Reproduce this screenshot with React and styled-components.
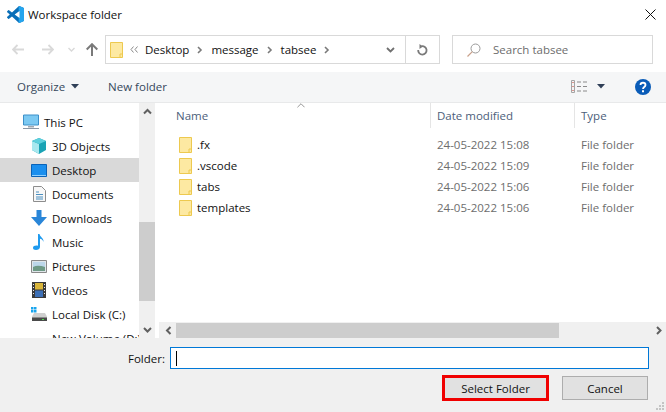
import React from "react";
import styled, { createGlobalStyle } from "styled-components";

const GlobalStyle = createGlobalStyle`
  html, body { margin: 0; padding: 0; background: #fff; }
  body { font-family: "Open Sans", "Noto Sans", sans-serif; font-size: 11.5px; color: #111; }
  * { box-sizing: border-box; }
`;

const Dialog = styled.div`
  width: 666px;
  height: 412px;
  display: flex;
  flex-direction: column;
  overflow: hidden;
  background: #fff;
`;
const TitleBar = styled.div`
  height: 35px;
  display: flex;
  align-items: flex-start;
  padding: 6px 10px 0 7px;
  gap: 4px;
`;
const TitleText = styled.span`
  flex: 1;
  line-height: 18px;
`;
const CloseIcon = styled.svg`
  margin-top: 3px;
`;
const NavRow = styled.div`
  height: 29px;
  margin-bottom: 8px;
  display: flex;
  align-items: center;
  padding-right: 13px;
`;
const NavButtons = styled.div`
  width: 105px;
  height: 100%;
  display: grid;
  grid-template-columns: 30px 26px 18px 12px;
  padding-left: 12px;
  align-items: center;
`;
const AddressBox = styled.div`
  width: 335px;
  height: 29px;
  border: 1px solid #d9d9d9;
  display: flex;
  align-items: center;
  padding-left: 4px;
`;
const CrumbSep = styled.span`
  width: 22px;
  display: flex;
  justify-content: center;
  align-items: center;
  flex: none;
`;
const AddressEnd = styled.div`
  margin-left: auto;
  height: 100%;
  display: flex;
  align-items: center;
`;
const DropZone = styled.div`
  width: 32px;
  height: 100%;
  display: flex;
  align-items: center;
  justify-content: center;
  padding-left: 2px;
  border-right: 1px solid #d9d9d9;
`;
const RefreshZone = styled.div`
  width: 33px;
  height: 100%;
  display: flex;
  align-items: center;
  justify-content: center;
`;
const SearchBox = styled.div`
  margin-left: 12px;
  flex: 1;
  height: 29px;
  border: 1px solid #d9d9d9;
  display: flex;
  align-items: center;
  padding-left: 14px;
  gap: 12px;
  color: #6d6d6d;
`;
const Toolbar = styled.div`
  height: 31px;
  background: #f5f6f7;
  border-bottom: 1px solid #e8e9ea;
  display: flex;
  align-items: center;
  padding: 0 15px 0 17px;
  color: #36485c;
`;
const ToolItem = styled.span`
  display: flex;
  align-items: center;
  gap: ${(p) => p.$gap || 0}px;
  margin-right: ${(p) => p.$right || 0}px;
  padding-bottom: 2px;
`;
const Spacer = styled.div`
  flex: 1;
`;
const Main = styled.div`
  height: 235px;
  display: flex;
`;
const Sidebar = styled.div`
  width: 139px;
  padding-top: 7px;
  overflow: hidden;
  flex: none;
`;
const TreeRow = styled.div`
  height: 24px;
  display: flex;
  align-items: center;
  white-space: nowrap;
  padding-left: ${(p) => p.$indent}px;
  gap: 5px;
  background: ${(p) => (p.$active ? "#d9d9d9" : "transparent")};
`;
const IconSlot = styled.span`
  width: 16px;
  height: 16px;
  flex: none;
  display: flex;
  align-items: center;
  justify-content: center;
`;
const VScroll = styled.div`
  width: 16px;
  flex: none;
  background: #f0f0f0;
  display: flex;
  flex-direction: column;
`;
const ScrollBtn = styled.div`
  height: ${(p) => p.$h || 16}px;
  width: ${(p) => p.$w || 16}px;
  flex: none;
  display: flex;
  align-items: center;
  justify-content: center;
`;
const VThumb = styled.div`
  height: 79px;
  margin-top: 102px;
  background: #cdcdcd;
`;
const Pane = styled.div`
  flex: 1;
  min-width: 0;
  margin-left: 4px;
  display: flex;
  flex-direction: column;
`;
const ListArea = styled.div`
  flex: 1;
  position: relative;
`;
const SortCaret = styled.svg`
  position: absolute;
  left: 138px;
  top: 0;
`;
const HeaderRow = styled.div`
  height: 25px;
  display: grid;
  grid-template-columns: 272px 144px 1fr;
  margin-bottom: 6px;
  color: #4c607a;
`;
const HeaderCell = styled.div`
  display: flex;
  align-items: center;
  padding-left: ${(p) => p.$pad || 6}px;
  border-right: ${(p) => (p.$line ? "1px solid #e5e5e5" : "none")};
`;
const FileRow = styled.div`
  height: 21px;
  display: grid;
  grid-template-columns: 272px 144px 1fr;
  align-items: center;
  color: #6d6d6d;
`;
const FileName = styled.div`
  display: flex;
  align-items: center;
  gap: 5px;
  padding-left: 20px;
  color: #111;
`;
const FileCell = styled.div`
  padding-left: 6px;
`;
const HScroll = styled.div`
  height: 16px;
  background: #f0f0f0;
  display: flex;
  align-items: center;
  padding-left: 1px;
`;
const HThumb = styled.div`
  width: 383px;
  height: 15px;
  background: #cdcdcd;
`;
const Footer = styled.div`
  flex: 1;
  background: #f0f0f0;
  position: relative;
  padding: 9px 17px 0 0;
  display: flex;
  flex-direction: column;
`;
const FolderRow = styled.div`
  display: flex;
  align-items: center;
  justify-content: flex-end;
  gap: 5px;
`;
const FolderInput = styled.div`
  width: 479px;
  height: 22px;
  background: #fff;
  border: 1px solid #0078d7;
  display: flex;
  align-items: center;
  padding-left: 5px;
`;
const Caret = styled.span`
  width: 1px;
  height: 15px;
  background: #000;
`;
const ButtonRow = styled.div`
  margin-top: 6px;
  display: flex;
  justify-content: flex-end;
  align-items: center;
`;
const SelectButton = styled.div`
  width: 107px;
  height: 26px;
  border: 3px solid #f00000;
  background: #e1e1e1;
  display: flex;
  align-items: center;
  justify-content: center;
  margin-right: 13px;
`;
const CancelButton = styled.div`
  width: 86px;
  height: 24px;
  border: 1px solid #adadad;
  background: #e1e1e1;
  display: flex;
  align-items: center;
  justify-content: center;
  margin-right: 1px;
`;
const Grip = styled.svg`
  position: absolute;
  right: 1px;
  bottom: 1px;
`;

const VS_CODE_PATH =
  "M23.15 2.587L18.21.21a1.494 1.494 0 0 0-1.705.29l-9.46 8.63-4.12-3.128a.999.999 0 0 0-1.276.057L.327 7.261A1 1 0 0 0 .326 8.74L3.899 12 .326 15.26a1 1 0 0 0 .001 1.479L1.65 17.94a.999.999 0 0 0 1.276.057l4.12-3.128 9.46 8.63a1.492 1.492 0 0 0 1.704.29l4.942-2.377A1.5 1.5 0 0 0 24 20.06V3.939a1.5 1.5 0 0 0-.85-1.352zm-5.146 14.861L10.826 12l7.178-5.448v10.896z";

const VsCodeLogo = () => (
  <svg width="17" height="17" viewBox="0 0 24 24">
    <defs>
      <clipPath id="vsRight">
        <path d="M16.500 0H24v24h-7.500z" />
      </clipPath>
    </defs>
    <path d={VS_CODE_PATH} fill="#0a6fb8" />
    <path d={VS_CODE_PATH} fill="#25a5ee" clipPath="url(#vsRight)" />
  </svg>
);
const FolderIcon = () => (
  <svg width="13" height="16" viewBox="0 0 13 16">
    <path d="M.5.5h12v15H.5z" fill="#fde9a2" stroke="#edc94f" />
    <path d="M10 15v-3h2.500" fill="none" stroke="#edc94f" />
  </svg>
);
const Chevron = ({ color = "#7a7a7a" }) => (
  <svg width="6" height="8" viewBox="0 0 6 8">
    <path d="M1 1l3 3-3 3" fill="none" stroke={color} strokeWidth="1.6" />
  </svg>
);
const TriDown = ({ color = "#2f3f57" }) => (
  <svg width="8" height="5" viewBox="0 0 8 5">
    <path d="M0 0h8L4 4.500z" fill={color} />
  </svg>
);
const ScrollArrow = ({ d }) => (
  <svg width="9" height="9" viewBox="0 0 9 9">
    <path d={d} fill="none" stroke="#606060" strokeWidth="2" />
  </svg>
);
const MonitorIcon = () => (
  <svg width="16" height="16" viewBox="0 0 16 16">
    <path d="M.5 1h15v10H.5z" fill="#7cc9f2" stroke="#3d90c9" />
    <path d="M5 12h6v1.500H5z" fill="#a0a8b0" />
    <path d="M0 14h16v1H0z" fill="#8a97a5" />
  </svg>
);
const CubeIcon = () => (
  <svg width="16" height="16" viewBox="0 0 16 16">
    <path d="M8 0l7 3v9l-7 4-7-4V3z" fill="#1aa3b5" />
    <path d="M1 3l7 3v10l-7-4z" fill="#a8e8ef" />
    <path d="M8 0l7 3-7 3-7-3z" fill="#5fd0dd" />
  </svg>
);
const DesktopIcon = () => (
  <svg width="16" height="13" viewBox="0 0 16 13">
    <path d="M.5.500h15v12H.5z" fill="#1b8fee" stroke="#0a63b8" />
    <path d="M1 11h14v1H1z" fill="#8fd0ff" />
  </svg>
);
const DocIcon = () => (
  <svg width="13" height="16" viewBox="0 0 13 16">
    <path d="M.5.500h8l4 4v11H.5z" fill="#f7f7f7" stroke="#8d8d8d" />
    <path d="M3 6h3M3 8.500h7M3 11h7M3 13h7" stroke="#4a8fc0" />
  </svg>
);
const DownArrowIcon = () => (
  <svg width="16" height="16" viewBox="0 0 16 16">
    <path d="M5.500 0h5v7H16l-8 9-8-9h5.500z" fill="#2a86d8" />
  </svg>
);
const MusicIcon = () => (
  <svg width="12" height="16" viewBox="0 0 12 16">
    <path d="M5 0h1.500c.5 3 4.500 4 4 8-.5-2-2-3-3.500-3.300V13c0 2-2 3-4 3s-3-1-3-2.300C0 12 2.500 11 5 11.700z" fill="#1f9bef" />
  </svg>
);
const PictureIcon = () => (
  <svg width="16" height="13" viewBox="0 0 16 13">
    <path d="M.5.500h15v12H.5z" fill="#dfe6ea" stroke="#8a8a8a" />
    <path d="M2 2h12v5H2z" fill="#bcd7ea" />
    <path d="M2 7c4-2 8-1 12 0v4H2z" fill="#6e9a86" />
  </svg>
);
const VideoIcon = () => (
  <svg width="14" height="16" viewBox="0 0 14 16">
    <path d="M0 0h14v16H0z" fill="#3a3a3a" />
    <path d="M3 1h8v6.500H3z" fill="#d9b53a" />
    <path d="M3 8.500h8V15H3z" fill="#3c6fb5" />
    <path d="M1 2h1v1H1zM1 5h1v1H1zM1 8h1v1H1zM1 11h1v1H1zM12 2h1v1h-1zM12 5h1v1h-1zM12 8h1v1h-1zM12 11h1v1h-1z" fill="#eee" />
  </svg>
);
const DiskIcon = () => (
  <svg width="16" height="14" viewBox="0 0 16 14">
    <path d="M0 0h2.500v2.500H0zM3 0h2.500v2.500H3zM0 3h2.500v2.500H0zM3 3h2.500v2.500H3z" fill="#19a5ee" />
    <path d="M3 6h11l2 3.500V14H1V9.500z" fill="#cfcfcf" />
    <path d="M1 10.500h15V14H1z" fill="#4a4a4a" />
    <path d="M11 12h2v1h-2z" fill="#4fe04f" />
  </svg>
);

const treeItems = [
  { label: "This PC", indent: 23, icon: <MonitorIcon /> },
  { label: "3D Objects", indent: 31, icon: <CubeIcon /> },
  { label: "Desktop", indent: 31, icon: <DesktopIcon />, active: true },
  { label: "Documents", indent: 31, icon: <DocIcon /> },
  { label: "Downloads", indent: 31, icon: <DownArrowIcon /> },
  { label: "Music", indent: 31, icon: <MusicIcon /> },
  { label: "Pictures", indent: 31, icon: <PictureIcon /> },
  { label: "Videos", indent: 31, icon: <VideoIcon /> },
  { label: "Local Disk (C:)", indent: 31, icon: <DiskIcon /> },
  { label: "New Volume (D:)", indent: 31, icon: null },
];

const files = [
  { name: ".fx", date: "24-05-2022 15:08" },
  { name: ".vscode", date: "24-05-2022 15:09" },
  { name: "tabs", date: "24-05-2022 15:06" },
  { name: "templates", date: "24-05-2022 15:06" },
];

export default function App() {
  return (
    <Dialog>
      <GlobalStyle />
      <TitleBar>
        <VsCodeLogo />
        <TitleText>Workspace folder</TitleText>
        <CloseIcon width="11" height="11" viewBox="0 0 11 11">
          <path d="M.5.500l10 10M10.500.500l-10 10" stroke="#111" strokeWidth="1" />
        </CloseIcon>
      </TitleBar>

      <NavRow>
        <NavButtons>
          <svg width="12" height="11" viewBox="0 0 12 11">
            <path d="M5.500 1L1 5.500 5.500 10M1 5.500h11" fill="none" stroke="#d9d9d9" strokeWidth="1.800" />
          </svg>
          <svg width="12" height="11" viewBox="0 0 12 11">
            <path d="M6.500 1L11 5.500 6.500 10M11 5.500H0" fill="none" stroke="#d9d9d9" strokeWidth="1.800" />
          </svg>
          <svg width="7" height="5" viewBox="0 0 7 5">
            <path d="M.5 1l3 3 3-3" fill="none" stroke="#d9d9d9" strokeWidth="1.400" />
          </svg>
          <svg width="12" height="13" viewBox="0 0 12 13">
            <path d="M.7 6.500L6 1.200l5.300 5.300M6 1.500V13" fill="none" stroke="#7a7a7a" strokeWidth="2" />
          </svg>
        </NavButtons>
        <AddressBox>
          <FolderIcon />
          <CrumbSep>
            <svg width="8" height="7" viewBox="0 0 8 7">
              <path d="M3.500.500L1 3.500l2.500 3M7.500.500L5 3.500l2.500 3" fill="none" stroke="#8a8a8a" />
            </svg>
          </CrumbSep>
          <span>Desktop</span>
          <CrumbSep><Chevron /></CrumbSep>
          <span>message</span>
          <CrumbSep><Chevron /></CrumbSep>
          <span>tabsee</span>
          <CrumbSep><Chevron /></CrumbSep>
          <AddressEnd>
            <DropZone>
              <svg width="9" height="6" viewBox="0 0 9 6">
                <path d="M1 1l3.500 3.500L8 1" fill="none" stroke="#707070" strokeWidth="1.800" />
              </svg>
            </DropZone>
            <RefreshZone>
              <svg width="11" height="12" viewBox="0 0 11 12">
                <path d="M4.500 2.300A4.200 4.200 0 1 1 1.200 6" fill="none" stroke="#7a7a7a" strokeWidth="1.800" />
                <path d="M2.500 0L6 2.500 2.500 5z" fill="#7a7a7a" />
              </svg>
            </RefreshZone>
          </AddressEnd>
        </AddressBox>
        <SearchBox>
          <svg width="14" height="14" viewBox="0 0 14 14">
            <circle cx="8.500" cy="5.500" r="4.500" fill="none" stroke="#9a9a9a" />
            <path d="M5.300 8.700L.5 13.500" stroke="#c9a08a" strokeWidth="1.200" />
          </svg>
          <span>Search tabsee</span>
        </SearchBox>
      </NavRow>

      <Toolbar>
        <ToolItem $gap={6} $right={29}>Organize <TriDown /></ToolItem>
        <ToolItem>New folder</ToolItem>
        <Spacer />
        <ToolItem $gap={9} $right={30}>
          <svg width="17" height="13" viewBox="0 0 17 13">
            <path d="M.5.500h3v12h-3z" fill="#f4f4f4" stroke="#a5a5a5" />
            <path d="M1.500 2h1v1h-1zM1.500 6h1v1h-1zM1.500 10h1v1h-1z" fill="#c0392b" />
            <path d="M6 2h4M12 2h4M6 6.500h4M12 6.500h4M6 11h4M12 11h4" stroke="#8a8a8a" />
          </svg>
          <TriDown />
        </ToolItem>
        <svg width="16" height="16" viewBox="0 0 16 16">
          <circle cx="8" cy="8" r="8" fill="#0a5cb8" />
          <path d="M5.500 6c0-3 5-3 5 0 0 2-2.500 2-2.500 4" fill="none" stroke="#fff" strokeWidth="1.800" />
          <path d="M7 11.200h2v2H7z" fill="#fff" />
        </svg>
      </Toolbar>

      <Main>
        <Sidebar>
          {treeItems.map((item) => (
            <TreeRow key={item.label} $indent={item.indent} $active={item.active}>
              <IconSlot>{item.icon}</IconSlot>
              <span>{item.label}</span>
            </TreeRow>
          ))}
        </Sidebar>
        <VScroll>
          <ScrollBtn $h={17}><ScrollArrow d="M1 6.500l3.500-3.500L8 6.500" /></ScrollBtn>
          <VThumb />
          <Spacer />
          <ScrollBtn $h={17}><ScrollArrow d="M1 3l3.500 3.500L8 3" /></ScrollBtn>
        </VScroll>
        <Pane>
          <ListArea>
            <SortCaret width="8" height="5" viewBox="0 0 9 5">
              <path d="M.5 4.500l4-4 4 4" fill="none" stroke="#8a8a8a" />
            </SortCaret>
            <HeaderRow>
              <HeaderCell $line $pad={17}>Name</HeaderCell>
              <HeaderCell $line $pad={6}>Date modified</HeaderCell>
              <HeaderCell $pad={6}>Type</HeaderCell>
            </HeaderRow>
            {files.map((file) => (
              <FileRow key={file.name}>
                <FileName><FolderIcon /><span>{file.name}</span></FileName>
                <FileCell>{file.date}</FileCell>
                <FileCell>File folder</FileCell>
              </FileRow>
            ))}
          </ListArea>
          <HScroll>
            <ScrollBtn $w={16} $h={15}><ScrollArrow d="M6.500 1L3 4.500 6.500 8" /></ScrollBtn>
            <HThumb />
            <Spacer />
            <ScrollBtn $w={16} $h={15}><ScrollArrow d="M3 1l3.500 3.500L3 8" /></ScrollBtn>
          </HScroll>
        </Pane>
      </Main>

      <Footer>
        <FolderRow>
          <span>Folder:</span>
          <FolderInput><Caret /></FolderInput>
        </FolderRow>
        <ButtonRow>
          <SelectButton>Select Folder</SelectButton>
          <CancelButton>Cancel</CancelButton>
        </ButtonRow>
        <Grip width="10" height="10" viewBox="0 0 10 10">
          <path d="M7 1h2v2H7zM4 4h2v2H4zM7 4h2v2H7zM1 7h2v2H1zM4 7h2v2H4zM7 7h2v2H7z" fill="#c4c4c4" />
        </Grip>
      </Footer>
    </Dialog>
  );
}
